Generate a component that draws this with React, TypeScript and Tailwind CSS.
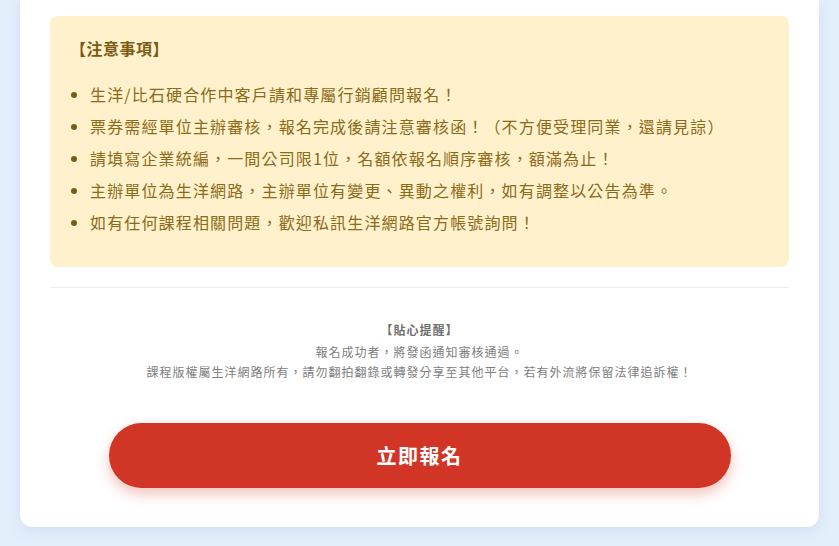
import React from "react";

const items = [
  "生洋/比石硬合作中客戶請和專屬行銷顧問報名！",
  "票券需經單位主辦審核，報名完成後請注意審核函！（不方便受理同業，還請見諒）",
  "請填寫企業統編，一間公司限1位，名額依報名順序審核，額滿為止！",
  "主辦單位為生洋網路，主辦單位有變更、異動之權利，如有調整以公告為準。",
  "如有任何課程相關問題，歡迎私訊生洋網路官方帳號詢問！",
];

export default function App() {
  return (
    <div
      className="min-h-[546px] w-full bg-[#e4effc] px-5 pb-[19px]"
      style={{ fontFamily: '"Noto Sans CJK TC", "Noto Sans", sans-serif' }}
    >
      <div className="rounded-b-xl bg-white px-[30px] pt-4 pb-[39px] shadow-[0_4px_14px_rgba(120,150,190,0.18)]">
        <div className="rounded-lg bg-[#fff1cc] px-5 pt-5 pb-[29px]">
          <div className="text-[16px] font-bold leading-6 tracking-[0.5px] text-[#7a5b12]">
            【注意事項】
          </div>
          <ul className="mt-[18px] list-disc pl-5 text-[16px] leading-8 tracking-[1.15px] text-[#8c6a18] marker:text-[#7a5b12]">
            {items.map((t) => (
              <li key={t}>{t}</li>
            ))}
          </ul>
        </div>
        <div className="mt-5 h-px bg-[#ececec]" />
        <div className="mt-8 text-center text-[12px] leading-5 tracking-[1px] text-[#7d7d7d]">
          <div className="mb-[2px] font-bold text-[#6f6f6f]">【貼心提醒】</div>
          <div>報名成功者，將發函通知審核通過。</div>
          <div>課程版權屬生洋網路所有，請勿翻拍翻錄或轉發分享至其他平台，若有外流將保留法律追訴權！</div>
        </div>
        <div className="mt-[41px] flex justify-center">
          <button className="h-[65px] w-[622px] rounded-full bg-[#d13526] text-[20px] font-bold tracking-[1.5px] text-white shadow-[0_6px_14px_rgba(209,53,38,0.3)]">
            立即報名
          </button>
        </div>
      </div>
    </div>
  );
}
